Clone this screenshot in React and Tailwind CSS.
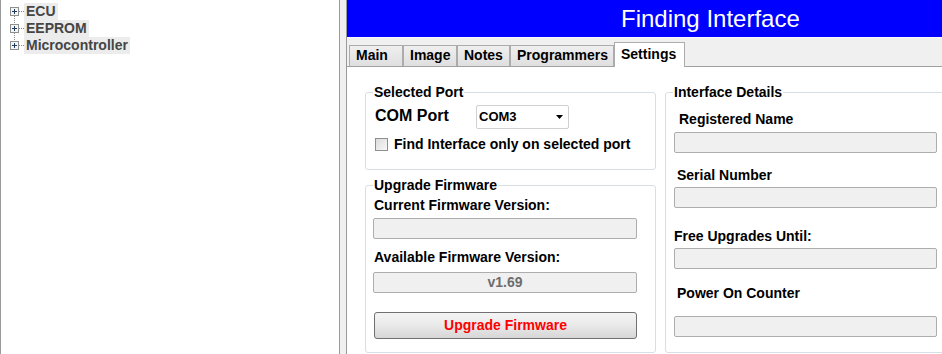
const TREE = ['ECU', 'EEPROM', 'Microcontroller'];
const TABS = [
  { label: 'Main', w: 'w-[54px]' },
  { label: 'Image', w: 'w-[54px]' },
  { label: 'Notes', w: 'w-[53px]' },
  { label: 'Programmers', w: 'w-[104px]' },
];

function TreeGlyph({ first, last }) {
  return (
    <svg width="23" height="17" viewBox="0 0 23 17" className="shrink-0">
      {!first && <line x1="13.5" y1="0" x2="13.5" y2="4" stroke="#8a8a8a" strokeDasharray="1 1" />}
      {!last && <line x1="13.5" y1="13" x2="13.5" y2="17" stroke="#8a8a8a" strokeDasharray="1 1" />}
      <line x1="18" y1="8.5" x2="23" y2="8.5" stroke="#8a8a8a" strokeDasharray="1 1" />
      <rect x="9.5" y="4.5" width="8" height="8" fill="#f4f4f4" stroke="#8e8f8f" />
      <line x1="11" y1="8.5" x2="16" y2="8.5" stroke="#1e395b" />
      <line x1="13.5" y1="6" x2="13.5" y2="11" stroke="#1e395b" />
    </svg>
  );
}

function TextBox({ className = '', children }) {
  return (
    <div className={`h-[21px] border border-[#adadad] rounded-[2px] bg-[#f0f0f0] flex items-center justify-center text-[14px] font-bold text-[#6d6d6d] ${className}`}>
      {children}
    </div>
  );
}

function Label({ className = '', children }) {
  return <p className={`text-[14px] leading-[16px] font-bold text-black ${className}`}>{children}</p>;
}

export default function App() {
  return (
    <div className="flex h-[354px] w-[942px] overflow-hidden bg-[#f0f0f0] font-['Liberation_Sans',Arial,sans-serif]">
      {/* tree */}
      <div className="w-[340px] shrink-0 border-l border-r border-[#9a9a9a] bg-white pt-[3px]">
        {TREE.map((t, i) => (
          <div key={t} className="flex h-[17px] items-center">
            <TreeGlyph first={i === 0} last={i === TREE.length - 1} />
            <span className="h-[17px] bg-[#ececec] px-[2px] text-[14px] font-bold leading-[17px] text-[#454545]">{t}</span>
          </div>
        ))}
      </div>

      <div className="w-[6px] shrink-0" />

      {/* right side */}
      <div className="flex min-w-0 flex-1 flex-col border-l border-[#9a9a9a]">
        <div className="flex h-[37px] shrink-0 items-center bg-[#0000ff] pl-[274px] text-[24px] leading-[28px] text-white">
          Finding Interface
        </div>

        <div className="flex h-[29px] shrink-0 items-end border-t border-[#f9f9f9] pl-[2px]">
          {TABS.map((t) => (
            <div key={t.label} className={`${t.w} h-[21px] border border-b-0 border-[#acacac] bg-gradient-to-b from-[#efefef] to-[#dfdfdf] pl-[6px] pt-[1px] text-[14px] font-bold leading-[16px] text-black`}>
              {t.label}
            </div>
          ))}
          <div className="relative z-10 -mb-px h-[25px] w-[71px] border border-b-0 border-[#acacac] bg-white pl-[6px] pt-[3px] text-[14px] font-bold leading-[16px] text-black">
            Settings
          </div>
        </div>

        <div className="flex flex-1 items-start gap-[9px] border-t border-[#a0a0a0] bg-white pl-[18px] pt-[17px]">
          {/* left column */}
          <div className="flex w-[291px] shrink-0 flex-col">
            <fieldset className="h-[86px] rounded-[3px] border border-[#d5dfe5] p-0">
              <legend className="ml-[7px] px-[1px] text-[14px] font-bold leading-[16px] text-black">Selected Port</legend>
              <div className="mt-[5px] flex h-[24px] items-center pl-[9px]">
                <span className="mb-[3px] w-[101px] text-[16px] font-bold leading-[18px] text-black">COM Port</span>
                <div className="flex h-[24px] w-[93px] items-center justify-between rounded-[2px] border border-[#d0d0d0] bg-white pl-[2px] pr-[5px]">
                  <span className="text-[13px] font-bold text-black">COM3</span>
                  <svg width="7" height="4" viewBox="0 0 7 4"><path d="M0 0h7L3.5 4z" fill="#000" /></svg>
                </div>
              </div>
              <div className="mt-[7px] flex h-[16px] items-center pl-[9px]">
                <span className="h-[13px] w-[13px] border border-[#8e8f8f] bg-gradient-to-br from-[#dcdcdc] to-[#f8f8f8]" />
                <Label className="ml-[6px]">Find Interface only on selected port</Label>
              </div>
            </fieldset>

            <fieldset className="mt-[7px] h-[176px] rounded-[3px] border border-[#d5dfe5] p-0">
              <legend className="ml-[7px] px-[1px] text-[14px] font-bold leading-[16px] text-black">Upgrade Firmware</legend>
              <Label className="mt-[4px] pl-[8px]">Current Firmware Version:</Label>
              <TextBox className="ml-[7px] mt-[5px] w-[264px]" />
              <Label className="mt-[10px] pl-[8px]">Available Firmware Version:</Label>
              <TextBox className="ml-[7px] mt-[7px] w-[264px]">v1.69</TextBox>
              <button className="ml-[8px] mt-[19px] flex h-[27px] w-[263px] items-center justify-center rounded-[3px] border border-[#707070] bg-gradient-to-b from-[#f4f4f4] via-[#e9e9e9] to-[#d6d6d6] text-[14px] font-bold text-[#ff0000]">
                Upgrade Firmware
              </button>
            </fieldset>
          </div>

          {/* right column */}
          <fieldset className="h-[269px] w-[290px] shrink-0 rounded-[3px] border border-[#d5dfe5] p-0">
            <legend className="ml-[7px] px-[1px] text-[14px] font-bold leading-[16px] text-black">Interface Details</legend>
            <Label className="mt-[11px] pl-[13px]">Registered Name</Label>
            <TextBox className="ml-[8px] mt-[5px] w-[263px]" />
            <Label className="mt-[14px] pl-[11px]">Serial Number</Label>
            <TextBox className="ml-[8px] mt-[4px] w-[263px]" />
            <Label className="mt-[20px] pl-[8px]">Free Upgrades Until:</Label>
            <TextBox className="ml-[8px] mt-[4px] w-[263px]" />
            <Label className="mt-[16px] pl-[11px]">Power On Counter</Label>
            <TextBox className="ml-[8px] mt-[15px] w-[263px]" />
          </fieldset>
        </div>
      </div>
    </div>
  );
}
